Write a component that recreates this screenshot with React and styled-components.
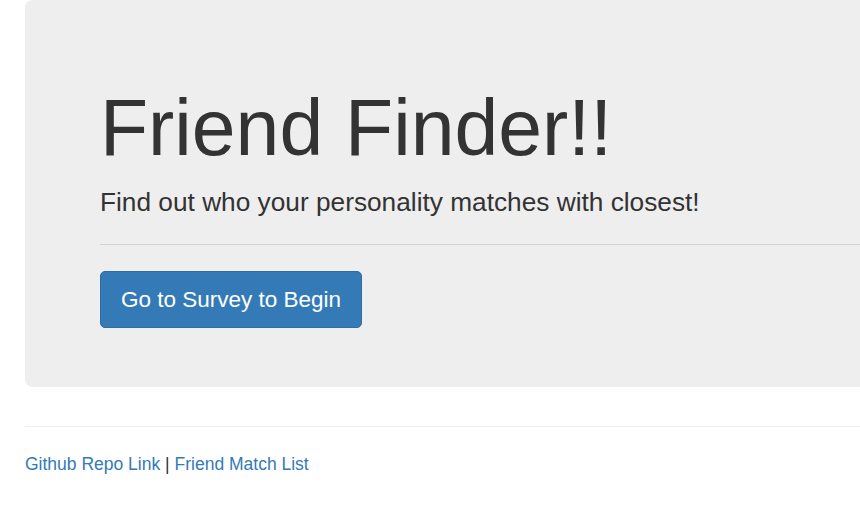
import React from "react";
import styled, { createGlobalStyle } from "styled-components";

const Global = createGlobalStyle`
  html, body { margin: 0; padding: 0; overflow: hidden; background: #fff; }
  body {
    font-family: "Liberation Sans", Arial, Helvetica, sans-serif;
    font-size: 17.5px;
    line-height: 1.42857;
    color: #333;
  }
`;

const Container = styled.div`
  padding-left: 25px;
`;

const Jumbotron = styled.section`
  background: #eeeeee;
  border-radius: 7.5px 0 0 7.5px;
  padding: 60px 0 59.5px 75px;
  margin-bottom: 39px;
  display: flow-root;
`;

const Title = styled.h1`
  font-size: 78.75px;
  line-height: 1.1;
  font-weight: 500;
  margin: 25px 0 12.5px;
  color: #333;
`;

const Lead = styled.p`
  font-size: 26.25px;
  line-height: 1.42857;
  font-weight: 400;
  margin: 0 0 18.75px;
`;

const Rule = styled.hr`
  border: 0;
  border-top: 1px solid ${(p) => p.$color};
  margin: ${(p) => p.$margin};
  height: 0;
`;

const Button = styled.a`
  display: inline-block;
  box-sizing: border-box;
  height: 57px;
  padding: 0 20px;
  line-height: 55px;
  font-size: 22.5px;
  color: #fff;
  background: #337ab7;
  border: 1px solid #2e6da4;
  border-radius: 5px;
  text-decoration: none;
  cursor: pointer;
`;

const Footer = styled.footer`
  font-size: 17.5px;
  line-height: 25px;
`;

const Link = styled.a`
  color: #337ab7;
  text-decoration: none;
`;

export default function App() {
  return (
    <>
      <Global />
      <Container>
        <Jumbotron>
          <Title>Friend Finder!!</Title>
          <Lead>Find out who your personality matches with closest!</Lead>
          <Rule $color="#d4d4d4" $margin="22px 0 26px" />
          <Button href="#">Go to Survey to Begin</Button>
        </Jumbotron>
        <Rule $color="#eeeeee" $margin="0 0 25px" />
        <Footer>
          <Link href="#">Github Repo Link</Link> | <Link href="#">Friend Match List</Link>
        </Footer>
      </Container>
    </>
  );
}
